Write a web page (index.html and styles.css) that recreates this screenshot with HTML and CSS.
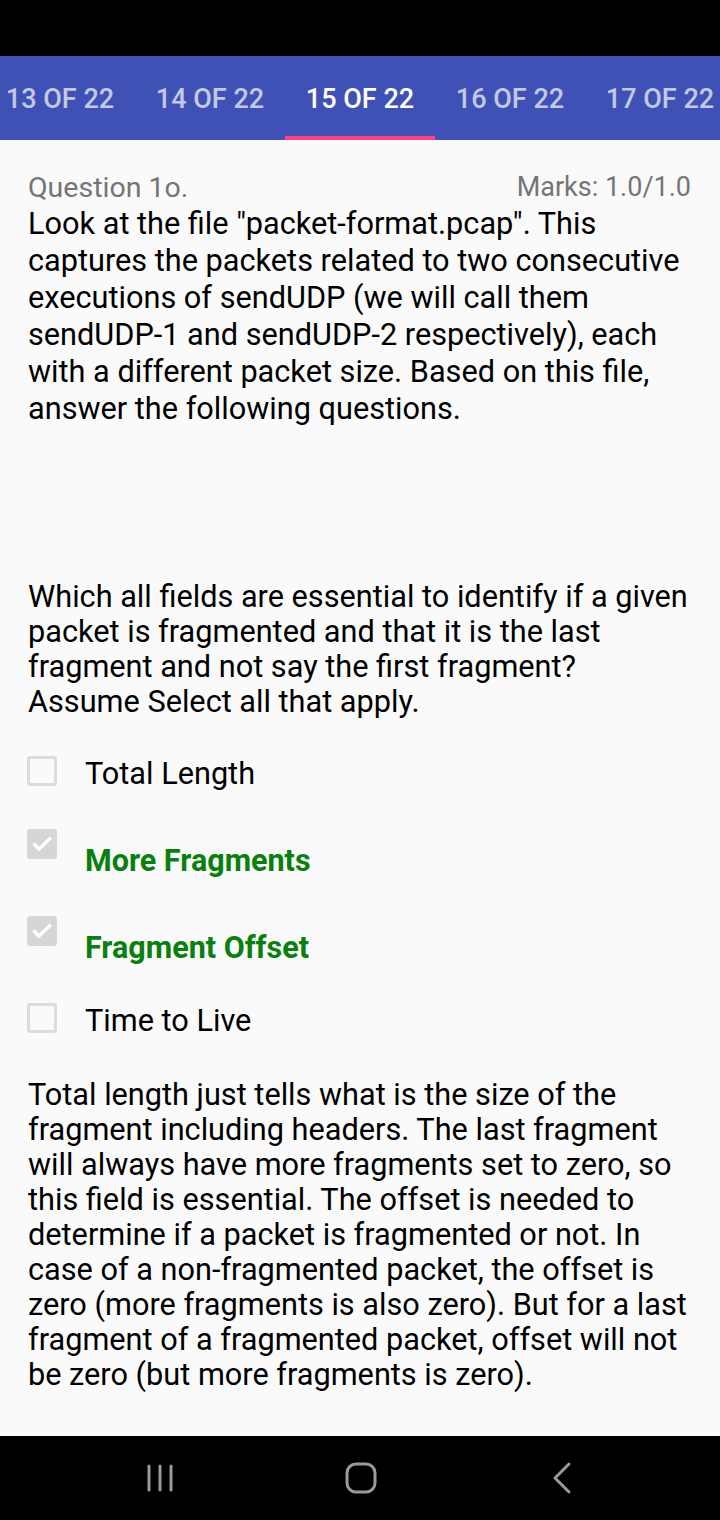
FILE: index.html
```html
<!DOCTYPE html>
<html>
<head>
<meta charset="utf-8">
<link rel="stylesheet" href="styles.css">
</head>
<body>
<div class="status"></div>
<div class="tabs">
  <div class="tab">13 OF 22</div>
  <div class="tab">14 OF 22</div>
  <div class="tab active">15 OF 22</div>
  <div class="tab">16 OF 22</div>
  <div class="tab">17 OF 22</div>
</div>
<main class="content">
  <div class="qhead">
    <span class="qnum">Question 1o.</span>
    <span class="marks">Marks: 1.0/1.0</span>
  </div>
  <p class="intro">Look at the file "packet-format.pcap". This captures the packets related to two consecutive executions of sendUDP (we will call them sendUDP-1 and sendUDP-2 respectively), each with a different packet size. Based on this file, answer the following questions.</p>
  <p class="question">Which all fields are essential to identify if a given packet is fragmented and that it is the last fragment and not say the first fragment? Assume Select all that apply.</p>
  <div class="options">
    <div class="opt"><span class="box"></span><span class="label">Total Length</span></div>
    <div class="opt correct"><span class="box checked"><svg viewBox="0 0 30 30" width="30" height="30"><path d="M6.5 14.5 L12 20 L24 8.5" fill="none" stroke="#fff" stroke-width="3.4"/></svg></span><span class="label">More Fragments</span></div>
    <div class="opt correct"><span class="box checked"><svg viewBox="0 0 30 30" width="30" height="30"><path d="M6.5 14.5 L12 20 L24 8.5" fill="none" stroke="#fff" stroke-width="3.4"/></svg></span><span class="label">Fragment Offset</span></div>
    <div class="opt"><span class="box"></span><span class="label">Time to Live</span></div>
  </div>
  <p class="explain">Total length just tells what is the size of the fragment including headers. The last fragment will always have more fragments set to zero, so this field is essential. The offset is needed to determine if a packet is fragmented or not. In case of a non-fragmented packet, the offset is zero (more fragments is also zero). But for a last fragment of a fragmented packet, offset will not be zero (but more fragments is zero).</p>
</main>
<nav class="navbar">
  <svg class="nav-ico" width="40" height="40" viewBox="0 0 40 40"><path d="M9 8 V32 M20 8 V32 M31 8 V32" stroke="#9a9a9a" stroke-width="3" stroke-linecap="round" fill="none"/></svg>
  <svg class="nav-ico" width="40" height="40" viewBox="0 0 40 40"><rect x="6" y="6" width="28" height="28" rx="9" ry="9" stroke="#9a9a9a" stroke-width="3" fill="none"/></svg>
  <svg class="nav-ico" width="40" height="40" viewBox="0 0 40 40"><path d="M27 6 L13 20 L27 34" stroke="#9a9a9a" stroke-width="3" stroke-linecap="round" stroke-linejoin="round" fill="none"/></svg>
</nav>
</body>
</html>
```
FILE: styles.css
```css
* { box-sizing: border-box; }
html, body { margin: 0; padding: 0; }
body {
  width: 720px;
  height: 1520px;
  background: #fafafa;
  font-family: Roboto, "Liberation Sans", sans-serif;
  display: flex;
  flex-direction: column;
  overflow: hidden;
}
.status { height: 56px; background: #000; flex: none; }
.tabs {
  height: 84px;
  background: #3f51b5;
  display: flex;
  margin-left: -15px;
  flex: none;
}
.tab {
  width: 150px;
  flex: none;
  display: flex;
  align-items: center;
  justify-content: center;
  font-size: 27px;
  font-weight: 500;
  color: rgba(255,255,255,0.7);
  border-bottom: 4px solid transparent;
  padding-top: 6px;
}
.tab.active { color: #fff; border-bottom-color: #ff4081; }
.content {
  flex: 1;
  padding: 22px 29px 0 28px;
}
.qhead {
  display: flex;
  justify-content: space-between;
  align-items: center;
  color: #757575;
  height: 50px;
}
.qnum { font-size: 28.5px; }
.marks { font-size: 27px; }
.intro {
  margin: -7px 0 0 0;
  font-size: 30.7px;
  line-height: 37px;
  color: #000;
}
.question {
  margin: 152px 0 0 0;
  font-size: 30.7px;
  line-height: 35px;
  color: #000;
}
.options {
  margin-top: 37px;
  display: flex;
  flex-direction: column;
}
.opt {
  display: flex;
  align-items: flex-start;
  margin-left: -1px;
  height: 73px;
}
.opt.correct { height: 87px; }
.opt:last-child { height: 74px; }
.box {
  width: 30px;
  height: 30px;
  border: 3px solid #dcdcdc;
  border-radius: 3px;
  flex: none;
  position: relative;
}
.box.checked { background: #d6d6d6; border-color: #d6d6d6; }
.box svg { position: absolute; left: -3px; top: -3px; }
.label {
  margin-left: 28px;
  font-size: 30.7px;
  line-height: 36px;
  color: #000;
}
.correct .label {
  color: #087f0f;
  font-weight: 700;
  font-size: 30.5px;
  margin-top: 14px;
}
.explain {
  margin: 0;
  font-size: 30.7px;
  line-height: 35px;
  color: #000;
}
.navbar {
  height: 84px;
  background: #000;
  flex: none;
  display: flex;
  align-items: center;
  justify-content: space-between;
  padding: 0 138px 0 140px;
}
```
